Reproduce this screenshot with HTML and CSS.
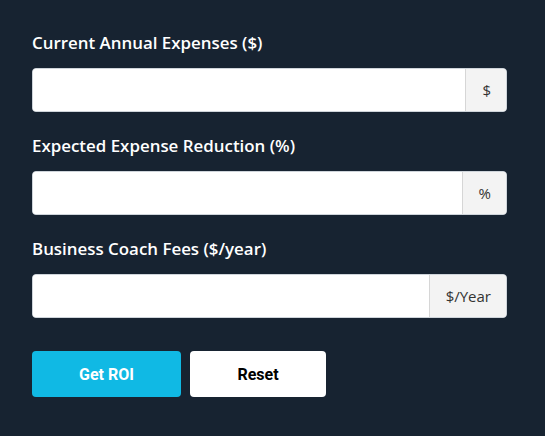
FILE: index.html
```html
<!DOCTYPE html>
<html lang="en">
<head>
  <meta charset="UTF-8">
  <title>ROI Calculator</title>
  <meta name="viewport" content="width=device-width, initial-scale=1.0">
  <link rel="stylesheet" href="styles.css">
</head>
<body>
  <div class="calculator">
    <div class="field">
      <label for="expenses">Current Annual Expenses ($)</label>
      <div class="input-group">
        <input type="text" id="expenses">
        <span class="addon">$</span>
      </div>
    </div>

    <div class="field">
      <label for="reduction">Expected Expense Reduction (%)</label>
      <div class="input-group">
        <input type="text" id="reduction">
        <span class="addon">%</span>
      </div>
    </div>

    <div class="field">
      <label for="fees">Business Coach Fees ($/year)</label>
      <div class="input-group">
        <input type="text" id="fees">
        <span class="addon">$/Year</span>
      </div>
    </div>

    <div class="buttons">
      <button class="btn btn-primary">Get ROI</button>
      <button class="btn btn-reset">Reset</button>
    </div>
  </div>
</body>
</html>
```

FILE: styles.css
```css
* {
  box-sizing: border-box;
}

body {
  margin: 0;
  padding: 0;
  background-color: #172331;
  font-family: 'Open Sans', Arial, sans-serif;
}

.calculator {
  padding: 31px 38px 0 32px;
}

.field {
  margin-bottom: 22px;
}

label {
  display: block;
  color: #fff;
  font-size: 16.9px;
  font-weight: 600;
  line-height: 24px;
  margin-bottom: 13px;
}

.input-group {
  display: flex;
  height: 44px;
  border: 1px solid #ced4da;
  border-radius: 4px;
  background-color: #fff;
  overflow: hidden;
}

.input-group input {
  flex: 1;
  min-width: 0;
  border: none;
  outline: none;
  padding: 0 12px;
  font-size: 16px;
  background: #fff;
}

.addon {
  display: flex;
  align-items: center;
  padding: 0 15px 0 16px;
  background-color: #f3f3f3;
  border-left: 1px solid #d6d6d6;
  color: #333;
  font-size: 15px;
}

.buttons {
  display: flex;
  gap: 9px;
  padding-top: 11px;
}

.btn {
  height: 46px;
  border: none;
  border-radius: 4px;
  font-family: Roboto, Arial, sans-serif;
  font-size: 16px;
  font-weight: 700;
  cursor: pointer;
}

.btn-primary {
  width: 149px;
  background-color: #10b9e4;
  color: #fff;
}

.btn-reset {
  width: 136px;
  background-color: #fff;
  color: #000;
}
```
